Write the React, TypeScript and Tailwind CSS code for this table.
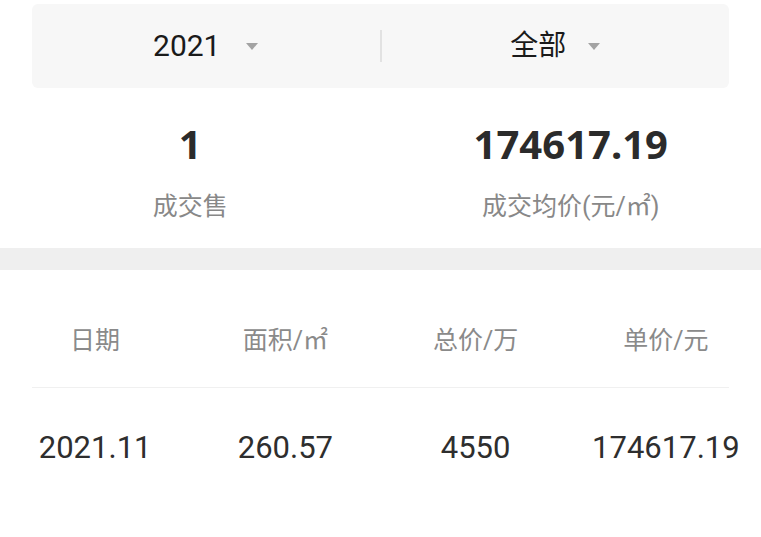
const cjk = "font-['Roboto','Noto_Sans_CJK_SC',sans-serif]";

function Caret() {
  return (
    <svg width="12" height="7" viewBox="0 0 12 7" className="shrink-0">
      <path d="M0 0 H12 L6 7 Z" fill="#a3a3a3" />
    </svg>
  );
}

const columns = ["日期", "面积/㎡", "总价/万", "单价/元"];
const rows = [["2021.11", "260.57", "4550", "174617.19"]];

export default function App() {
  return (
    <div className={`w-[761px] h-[537px] bg-white overflow-hidden ${cjk}`}>
      {/* filters */}
      <div className="px-8 pt-1">
        <div className="h-[84px] rounded-md bg-[#f7f7f7] flex items-center">
          <div className="flex-1 flex items-center justify-center gap-[26px]">
            <span className="text-[30px] leading-none text-[#1a1a1a]">2021</span>
            <Caret />
          </div>
          <div className="w-[2px] h-[32px] bg-[#e2e2e2]" />
          <div className="flex-1 flex items-center justify-center gap-[22px]">
            <span className="text-[28px] leading-none text-[#1a1a1a]">全部</span>
            <Caret />
          </div>
        </div>
      </div>

      {/* summary */}
      <div className="flex pt-[34px] pb-[26px]">
        <div className="flex-1 flex flex-col items-center">
          <span className="font-['Noto_Sans',sans-serif] font-bold text-[40px] leading-[44px] text-[#2b2b2b]">1</span>
          <span className="mt-[26px] text-[25px] leading-[30px] text-[#888]">成交售</span>
        </div>
        <div className="flex-1 flex flex-col items-center">
          <span className="font-['Noto_Sans',sans-serif] font-bold text-[40px] leading-[44px] text-[#2b2b2b]">174617.19</span>
          <span className="mt-[26px] text-[25px] leading-[30px] text-[#888]">成交均价(元/㎡)</span>
        </div>
      </div>

      <div className="h-[22px] bg-[#efefef]" />

      {/* table */}
      <div className="grid grid-cols-4 pt-[56px] pb-[31px]">
        {columns.map((c) => (
          <div key={c} className="text-center text-[25px] leading-[30px] text-[#8a8a8a]">
            {c}
          </div>
        ))}
      </div>
      <div className="mx-8 h-px bg-[#f0f0f0]" />
      {rows.map((r, i) => (
        <div key={i} className="grid grid-cols-4 pt-[45px]">
          {r.map((v, j) => (
            <div key={j} className="text-center text-[31px] leading-[30px] text-[#2e2e2e]">
              {v}
            </div>
          ))}
        </div>
      ))}
    </div>
  );
}
